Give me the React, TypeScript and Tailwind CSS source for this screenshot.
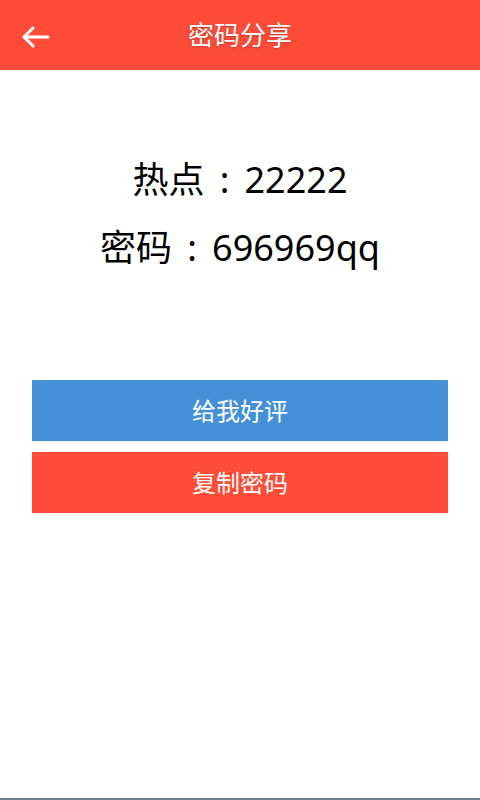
export default function App() {
  const font = { fontFamily: '"Noto Sans", "Noto Sans CJK SC", sans-serif' };

  return (
    <div className="flex h-[800px] w-[480px] flex-col bg-white" style={font}>
      <header className="relative flex h-[70px] shrink-0 items-center justify-center bg-[#fe4c38]">
        <button className="absolute left-[22px] top-[25px] flex h-[24px] w-[28px] items-center justify-center">
          <svg viewBox="0 0 28 22" className="h-[22px] w-[28px]" fill="none" stroke="white" strokeWidth="3" strokeLinecap="round" strokeLinejoin="round">
            <path d="M26 11H3" />
            <path d="M11 2 2 11l9 9" />
          </svg>
        </button>
        <h1 className="text-[26px] leading-none text-white [text-shadow:0_1px_2px_rgba(0,0,0,0.25)]">密码分享</h1>
      </header>

      <main className="flex flex-1 flex-col">
        <div className="mt-[85px] flex flex-col items-center gap-[18px] text-[36px] leading-[50px] text-black">
          <p>
            热点<span className="inline-block w-[40px] text-center">:</span>22222
          </p>
          <p>
            密码<span className="inline-block w-[40px] text-center">:</span>696969qq
          </p>
        </div>

        <div className="mx-[32px] mt-[107px] flex flex-col gap-[11px]">
          <button className="h-[61px] w-full bg-[#4490d6] text-[24px] text-white">给我好评</button>
          <button className="h-[61px] w-full bg-[#fe4c38] text-[24px] text-white">复制密码</button>
        </div>
      </main>

      <div className="h-[2px] shrink-0 bg-[#6f8390]" />
    </div>
  );
}
